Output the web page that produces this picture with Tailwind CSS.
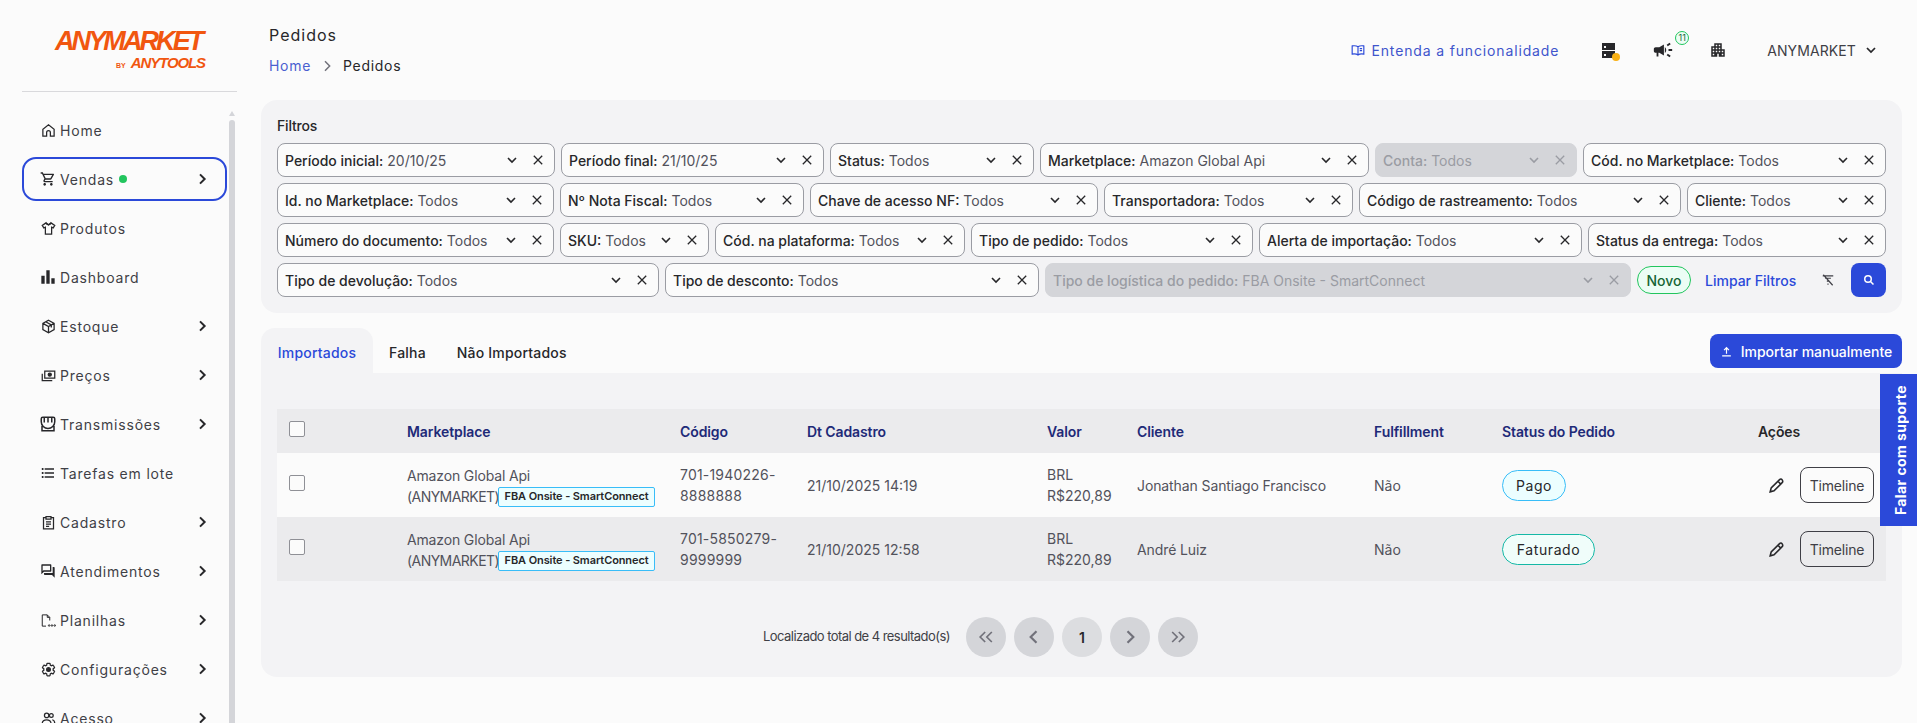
<!DOCTYPE html>
<html lang="pt-BR">
<head>
  <meta charset="UTF-8" />
  <title>Pedidos - ANYMARKET</title>
  <script src="https://cdn.jsdelivr.net/npm/@tailwindcss/browser@4"></script>
</head>
<body class="bg-[#fbfbfb] font-[Inter,sans-serif] text-[#27272a] h-[723px] overflow-hidden">
<div class="flex h-[723px] overflow-hidden relative">

  <!-- Sidebar -->
  <aside class="w-[236px] shrink-0 flex flex-col pl-[22px]">
    <div class="h-[92px] border-b border-[#d9d9dc] w-[215px] pt-[30px] pl-[33px] flex flex-col shrink-0">
      <div class="font-['Liberation_Sans'] font-bold italic text-[27px] leading-[23px] tracking-[-2.9px] text-[#f1560f] whitespace-nowrap">ANYMARKET</div>
      <div class="flex items-baseline justify-end gap-[5px] w-[150px] mt-[2px] font-['Liberation_Sans'] font-bold italic text-[#f1560f] leading-[16px]">
        <span class="text-[7px] not-italic">BY</span>
        <span class="text-[15px] tracking-[-1.1px]">ANYTOOLS</span>
      </div>
    </div>
    <div class="flex flex-1 min-h-0 overflow-hidden">
      <nav id="nav" class="w-[207px] shrink-0 pt-[16px] flex flex-col"></nav>
      <div class="w-[6px] pt-[19px] flex flex-col">
        <svg class="w-[6px] h-[5px] shrink-0 text-[#d4d5d9]" viewBox="0 0 6 5" fill="currentColor"><path d="M3 0 6 5H0z"/></svg>
        <div class="flex-1 mt-[4px] rounded-t bg-[#d4d5d9]"></div>
      </div>
    </div>
  </aside>

  <!-- Main -->
  <main class="flex-1 min-w-0 pl-[25px] pr-[15px]">
    <header class="h-[100px] flex justify-between">
      <div class="pl-[8px] pt-[24px]">
        <div class="text-[16px] leading-[22px] tracking-[1px] text-[#27272a]">Pedidos</div>
        <div class="flex items-center mt-[9px] text-[14px] leading-[22px] tracking-[0.7px]">
          <span class="text-[#4a5fd0]">Home</span>
          <svg class="w-[16px] h-[16px] mx-[8px] text-[#71717a]" viewBox="0 0 24 24" fill="none" stroke="currentColor" stroke-width="2.2"><path d="m9 5 7 7-7 7"/></svg>
          <span>Pedidos</span>
        </div>
      </div>
      <div class="flex items-center h-[100px] pr-[25px]">
        <svg class="w-[14px] h-[14px] text-[#2b49d9]" viewBox="0 0 24 24" fill="none" stroke="currentColor" stroke-width="2"><path d="M12 6.5C10 5 6 4.500 2 5v14c4-.5 8 0 10 1.500 2-1.500 6-2 10-1.500V5c-4-.5-8 0-10 1.500zM12 6.500v14M15 9.500h4M15 13h4"/></svg>
        <span class="ml-[6px] text-[14px] tracking-[0.85px] text-[#3f55cc]">Entenda a funcionalidade</span>
        <span class="relative ml-[42px] w-[17px] h-[17px]">
          <svg class="w-[15px] h-[17px] text-[#27272a]" viewBox="0 0 15 17" fill="currentColor"><path d="M1 1h13v7H1zM1 9h13v7H1z"/><path fill="#fbfbfb" d="M3 4h2v2H3zM3 12h2v2H3z"/></svg>
          <span class="absolute right-[-2px] bottom-[-2px] w-[8px] h-[8px] rounded-full bg-[#f9b115]"></span>
        </span>
        <span class="relative ml-[36px] w-[18px] h-[16px] flex items-center justify-center">
          <svg class="w-[22px] h-[22px] shrink-0 text-[#27272a]" viewBox="0 0 24 24" fill="currentColor"><path d="M18 11v2h4v-2h-4zm-2 6.610c.960.710 2.210 1.650 3.200 2.390.400-.530.800-1.070 1.200-1.600-.990-.740-2.240-1.680-3.200-2.400-.400.540-.800 1.080-1.200 1.610zM20.400 5.600c-.400-.530-.800-1.070-1.200-1.600-.990.740-2.240 1.680-3.200 2.400.400.530.800 1.070 1.200 1.600.960-.720 2.210-1.650 3.200-2.400zM4 9c-1.100 0-2 .900-2 2v2c0 1.100.900 2 2 2h1v4h2v-4h1l5 3V6L8 9H4zm11.500 3c0-1.330-.580-2.530-1.500-3.350v6.690c.920-.810 1.500-2.010 1.500-3.340z"/></svg>
          <span class="absolute left-[21px] top-[-11px] w-[14px] h-[14px] rounded-full border border-[#22c55e] bg-[#ecfdf5] text-[#166534] text-[9px] leading-[12px] text-center">11</span>
        </span>
        <svg class="ml-[37px] w-[18px] h-[18px] text-[#27272a]" viewBox="0 0 24 24" fill="currentColor"><path d="M17 11V3H7v4H3v14h8v-4h2v4h8V11h-4zM7 19H5v-2h2v2zm0-4H5v-2h2v2zm0-4H5V9h2v2zm4 4H9v-2h2v2zm0-4H9V9h2v2zm0-4H9V5h2v2zm4 8h-2v-2h2v2zm0-4h-2V9h2v2zm0-4h-2V5h2v2zm4 12h-2v-2h2v2zm0-4h-2v-2h2v2z"/></svg>
        <span class="ml-[40px] text-[14px] tracking-[0.1px] text-[#3f3f46]">ANYMARKET</span>
        <svg class="ml-[9px] w-[12px] h-[12px] text-[#27272a]" viewBox="0 0 24 24" fill="none" stroke="currentColor" stroke-width="3.500"><path d="m4 8 8 8 8-8"/></svg>
      </div>
    </header>

    <!-- Filtros -->
    <section class="h-[213px] bg-[#f3f3f5] rounded-[16px] px-[16px] pt-[15px]">
      <div class="text-[14px] leading-[22px] font-medium text-[#27272a] tracking-[-0.2px] mb-[6px]">Filtros</div>
      <div id="filters" class="flex flex-col gap-[6px]"></div>
    </section>

    <!-- Tabs -->
    <div class="flex justify-between items-end h-[60px]">
      <div class="flex text-[14px] font-medium tracking-[0.2px]">
        <div class="h-[45px] pt-[4px] w-[112px] rounded-t-[14px] bg-[#f3f3f5] text-[#2b49d9] flex items-center justify-center">Importados</div>
        <div class="h-[45px] pt-[4px] flex items-center ml-[16px]">Falha</div>
        <div class="h-[45px] pt-[4px] flex items-center ml-[31px]">Não Importados</div>
      </div>
      <button class="h-[34px] w-[192px] mb-[5px] rounded-[8px] bg-[#2b49d9] text-white text-[14px] font-medium flex items-center justify-center gap-[8px]">
        <svg class="w-[13px] h-[13px]" viewBox="0 0 24 24" fill="none" stroke="currentColor" stroke-width="2.200"><path d="M12 16V5M7.500 9.500 12 5l4.500 4.500M4 20h16"/></svg>
        Importar manualmente
      </button>
    </div>

    <!-- Pedidos -->
    <section class="bg-[#f3f3f5] rounded-b-[16px] px-[16px] pt-[36px] pb-[20px]">
      <table class="table-fixed w-[1609px] text-[14px] text-[#52525b]">
        <colgroup>
          <col class="w-[130px]"/><col class="w-[273px]"/><col class="w-[127px]"/><col class="w-[240px]"/><col class="w-[90px]"/><col class="w-[237px]"/><col class="w-[128px]"/><col class="w-[256px]"/><col class="w-[128px]"/>
        </colgroup>
        <thead class="bg-[#ebebed] text-left text-[#1e2a78] font-semibold tracking-[-0.1px]">
          <tr class="h-[44px]">
            <th class="pl-[12px] pb-[5px]"><input type="checkbox" class="appearance-none block w-[16px] h-[16px] rounded-[2px] border border-[#8f9096] bg-[#fbfbfb]"/></th>
            <th class="font-semibold">Marketplace</th><th class="font-semibold">Código</th><th class="font-semibold">Dt Cadastro</th><th class="font-semibold">Valor</th><th class="font-semibold">Cliente</th><th class="font-semibold">Fulfillment</th><th class="font-semibold">Status do Pedido</th><th class="font-semibold text-[#27272a]">Ações</th>
          </tr>
        </thead>
        <tbody id="rows"></tbody>
      </table>
      <div class="flex items-center pl-[486px] mt-[36px] h-[40px]">
        <span class="text-[13px] text-[#3f3f46] tracking-[-0.55px] w-[203px] whitespace-nowrap">Localizado total de 4 resultado(s)</span>
        <div class="flex gap-[8px] text-[#71717a]">
          <span class="w-[40px] h-[40px] rounded-full bg-[#d4d5d9] flex items-center justify-center"><svg class="w-[20px] h-[20px]" viewBox="0 0 24 24" fill="none" stroke="currentColor" stroke-width="2"><path d="m11 6-6 6 6 6M19 6l-6 6 6 6"/></svg></span>
          <span class="w-[40px] h-[40px] rounded-full bg-[#d4d5d9] flex items-center justify-center"><svg class="w-[20px] h-[20px]" viewBox="0 0 24 24" fill="none" stroke="currentColor" stroke-width="2.600"><path d="m15 5-7 7 7 7"/></svg></span>
          <span class="w-[40px] h-[40px] rounded-full bg-[#dcdde0] flex items-center justify-center text-[14px] font-semibold text-[#27272a]">1</span>
          <span class="w-[40px] h-[40px] rounded-full bg-[#d4d5d9] flex items-center justify-center"><svg class="w-[20px] h-[20px]" viewBox="0 0 24 24" fill="none" stroke="currentColor" stroke-width="2.600"><path d="m9 5 7 7-7 7"/></svg></span>
          <span class="w-[40px] h-[40px] rounded-full bg-[#d4d5d9] flex items-center justify-center"><svg class="w-[20px] h-[20px]" viewBox="0 0 24 24" fill="none" stroke="currentColor" stroke-width="2"><path d="m5 6 6 6-6 6M13 6l6 6-6 6"/></svg></span>
        </div>
      </div>
    </section>
  </main>

  <!-- Falar com suporte -->
  <div class="absolute right-0 top-[374px] w-[37px] h-[152px] pl-[3px] bg-[#2b49d9] text-white flex items-center justify-center">
    <span class="[writing-mode:vertical-rl] rotate-180 font-bold text-[14px] tracking-[0.4px] whitespace-nowrap">Falar com suporte</span>
  </div>
</div>

<script>
  const chevron = '<svg class="w-[16px] h-[16px]" viewBox="0 0 24 24" fill="none" stroke="currentColor" stroke-width="3"><path d="m9 5 7 7-7 7"/></svg>';
  const stroke = 'fill="none" stroke="currentColor" stroke-width="2"';
  const icons = {
    home: `<svg class="w-[15px] h-[15px]" viewBox="0 0 24 24" ${stroke}><path d="M3 21V10l9-7 9 7v11h-6v-6a3 3 0 0 0-6 0v6z"/></svg>`,
    cart: '<svg class="w-[16px] h-[16px]" viewBox="0 0 24 24" fill="currentColor"><path d="M15.550 13c.750 0 1.410-.410 1.750-1.030l3.580-6.490A.996.996 0 0 0 20.010 4H5.210l-.940-2H1v2h2l3.600 7.590-1.350 2.440C4.520 15.370 5.480 17 7 17h12v-2H7l1.100-2h7.450zM6.160 6h12.150l-2.760 5H8.530L6.160 6zM7 18c-1.100 0-1.990.900-1.990 2S5.900 22 7 22s2-.900 2-2-.900-2-2-2zm10 0c-1.100 0-1.990.900-1.990 2s.890 2 1.990 2 2-.900 2-2-.900-2-2-2z"/></svg>',
    shirt: `<svg class="w-[15px] h-[15px]" viewBox="0 0 24 24" ${stroke}><path d="M8 3 2 7l2.500 4L7 10v11h10V10l2.500 1L22 7l-6-4c-.5 2-2 3-4 3s-3.500-1-4-3z"/><path d="M8 3c1 1 2.500 1.500 4 3 1.500-1.500 3-2 4-3"/></svg>`,
    chart: '<svg class="w-[16px] h-[16px]" viewBox="0 0 24 24" fill="currentColor"><path d="M2 10h5v12H2zM9.500 2h5v20h-5zM17 14h5v8h-5z"/></svg>',
    box: `<svg class="w-[15px] h-[15px]" viewBox="0 0 24 24" ${stroke}><path d="m12 2 9 5v10l-9 5-9-5V7zM3 7l9 5 9-5M12 12v10M7.500 4.500l9 5v4"/></svg>`,
    money: `<svg class="w-[15px] h-[15px]" viewBox="0 0 24 24" ${stroke}><path d="M6 5h16v11H6z"/><circle cx="14" cy="10.500" r="2.500" fill="currentColor"/><path d="M2 9v11h16" /></svg>`,
    store: `<svg class="w-[18px] h-[18px] shrink-0" viewBox="0 0 24 24" ${stroke}><path d="M3 9V5a2 2 0 0 1 2-2h14a2 2 0 0 1 2 2v4a3 3 0 0 1-18 0zM7 3v7M12 3v7M17 3v7M4 12v9h16v-9"/></svg>`,
    list: '<svg class="w-[16px] h-[16px]" viewBox="0 0 24 24" fill="currentColor"><path d="M4 10.500c-.830 0-1.500.670-1.500 1.500s.670 1.500 1.500 1.500 1.500-.670 1.500-1.500-.670-1.500-1.500-1.500zm0-6c-.830 0-1.500.670-1.500 1.500S3.170 7.500 4 7.500 5.500 6.830 5.500 6 4.830 4.500 4 4.500zm0 12c-.830 0-1.500.680-1.500 1.500s.680 1.500 1.500 1.500 1.500-.680 1.500-1.500-.670-1.500-1.500-1.500zM7 19h14v-2H7v2zm0-6h14v-2H7v2zm0-8v2h14V5H7z"/></svg>',
    clip: `<svg class="w-[15px] h-[15px]" viewBox="0 0 24 24" ${stroke}><path d="M8 4H4v18h16V4h-4M8 2.500h8v4H8zM8 11h8M8 14.500h8M8 18h5"/></svg>`,
    chat: '<svg class="w-[16px] h-[16px]" viewBox="0 0 24 24" fill="currentColor"><path d="M15 4v7H5.170L4 12.170V4h11m1-2H3c-.550 0-1 .450-1 1v14l4-4h10c.550 0 1-.450 1-1V3c0-.550-.450-1-1-1zm5 4h-2v9H6v2c0 .550.450 1 1 1h11l4 4V7c0-.550-.450-1-1-1z"/></svg>',
    sheet: `<svg class="w-[15px] h-[15px]" viewBox="0 0 24 24" fill="none" stroke="currentColor" stroke-width="1.600"><path d="M8 21H2V3h8l4 4v5"/><path d="M10 3v4h4"/><circle cx="13" cy="20" r="1.200"/><circle cx="17.500" cy="20" r="1.200"/><circle cx="22" cy="20" r="1.200"/></svg>`,
    gear: `<svg class="w-[15px] h-[15px]" viewBox="0 0 24 24" ${stroke}><path d="M19.430 12.980c.040-.320.070-.640.070-.980s-.030-.660-.070-.980l2.110-1.650c.190-.150.240-.420.120-.640l-2-3.460c-.120-.220-.390-.300-.610-.220l-2.490 1c-.520-.400-1.080-.730-1.690-.980l-.380-2.650C14.460 2.180 14.250 2 14 2h-4c-.250 0-.460.180-.490.420l-.380 2.650c-.610.250-1.170.590-1.690.980l-2.490-1c-.230-.090-.490 0-.610.220l-2 3.460c-.130.220-.070.490.120.640l2.110 1.650c-.040.320-.070.650-.070.980s.030.660.070.980l-2.110 1.650c-.190.150-.240.420-.120.640l2 3.460c.120.220.390.300.610.220l2.490-1c.520.400 1.080.730 1.690.980l.380 2.650c.030.240.240.420.490.420h4c.250 0 .460-.180.490-.420l.380-2.650c.610-.250 1.170-.590 1.690-.980l2.490 1c.230.090.490 0 .610-.220l2-3.460c.120-.220.070-.490-.120-.640l-2.110-1.650z"/><circle cx="12" cy="12" r="3" fill="currentColor"/></svg>`,
    users: `<svg class="w-[15px] h-[15px]" viewBox="0 0 24 24" ${stroke}><circle cx="9" cy="7" r="3.500"/><circle cx="16.500" cy="7" r="3"/><path d="M2 20c0-4 3-6 7-6s7 2 7 6zM18 14c2.500.500 4 2.500 4 6"/></svg>`
  };

  const navItems = [
    ['home', 'Home', false], ['cart', 'Vendas', true], ['shirt', 'Produtos', false], ['chart', 'Dashboard', false],
    ['box', 'Estoque', true], ['money', 'Preços', true], ['store', 'Transmissões', true], ['list', 'Tarefas em lote', false],
    ['clip', 'Cadastro', true], ['chat', 'Atendimentos', true], ['sheet', 'Planilhas', true], ['gear', 'Configurações', true], ['users', 'Acesso', true]
  ];
  document.getElementById('nav').innerHTML = navItems.map(([icon, label, arrow]) => {
    const active = label === 'Vendas';
    return `<div class="shrink-0 h-[44px] mb-[5px] w-[205px] flex items-center pl-[16px] pr-[15px] rounded-[14px] border-2 ${active ? 'border-[#2b49d9]' : 'border-transparent'} text-[14px] tracking-[0.8px] text-[#3f3f46]">
      <span class="w-[16px] flex justify-center text-[#27272a]">${icons[icon]}</span>
      <span class="ml-[4px]">${label}</span>
      ${active ? '<span class="ml-[5px] w-[8px] h-[8px] rounded-full bg-[#22c55e]"></span>' : ''}
      ${arrow ? `<span class="ml-auto text-[#27272a]">${chevron}</span>` : ''}
    </div>`;
  }).join('');

  // [width, label, value, disabled]
  const filterRows = [
    [[278, 'Período inicial', '20/10/25'], [263, 'Período final', '21/10/25'], [204, 'Status', 'Todos'], [329, 'Marketplace', 'Amazon Global Api'], [202, 'Conta', 'Todos', true], [303, 'Cód. no Marketplace', 'Todos']],
    [[277, 'Id. no Marketplace', 'Todos'], [244, 'Nº Nota Fiscal', 'Todos'], [288, 'Chave de acesso NF', 'Todos'], [249, 'Transportadora', 'Todos'], [322, 'Código de rastreamento', 'Todos'], [199, 'Cliente', 'Todos']],
    [[277, 'Número do documento', 'Todos'], [149, 'SKU', 'Todos'], [250, 'Cód. na plataforma', 'Todos'], [282, 'Tipo de pedido', 'Todos'], [323, 'Alerta de importação', 'Todos'], [298, 'Status da entrega', 'Todos']]
  ];

  function chip([width, label, value, disabled]) {
    return `<div style="width:${width}px" class="shrink-0 h-[34px] rounded-[8px] flex items-center pl-[7px] pr-[11px] border text-[14px] ${disabled ? 'bg-[#d4d5d9] border-[#d4d5d9] text-[#9a9ca3]' : 'bg-[#fbfbfb] border-[#9a9ca3] text-[#27272a]'}">
      <span class="flex-1 min-w-0 truncate"><span class="font-medium">${label}:</span> <span class="${disabled ? '' : 'text-[#52525b]'}">${value}</span></span>
      <svg class="w-[10px] h-[10px] shrink-0" viewBox="0 0 10 10" fill="none" stroke="currentColor" stroke-width="1.600"><path d="m1 3 4 4 4-4"/></svg>
      <svg class="ml-[16px] w-[10px] h-[10px] shrink-0" viewBox="0 0 10 10" fill="none" stroke="currentColor" stroke-width="1.300"><path d="m.8.8 8.400 8.400M9.200.8.8 9.200"/></svg>
    </div>`;
  }

  const extras = `
    <div class="shrink-0 h-[28px] w-[54px] rounded-full border border-[#22c55e] bg-[#ecfdf5] text-[#166534] text-[14px] font-medium flex items-center justify-center">Novo</div>
    <span class="ml-[14px] shrink-0 text-[14px] font-medium text-[#2b49d9]">Limpar Filtros</span>
    <svg class="ml-[25px] w-[14px] h-[14px] text-[#3f3f46] shrink-0" viewBox="0 0 24 24" fill="none" stroke="currentColor" stroke-width="2"><path d="M3 5h18M7 9h10M10 14h4M11 19h2M4 3l16 18"/></svg>
    <span class="ml-auto w-[35px] h-[34px] rounded-[8px] bg-[#2b49d9] flex items-center justify-center shrink-0"><svg class="w-[12px] h-[12px] text-white" viewBox="0 0 24 24" fill="none" stroke="currentColor" stroke-width="3"><circle cx="10" cy="10" r="6.500"/><path d="m15 15 6 6"/></svg></span>`;

  const rowHtml = r => `<div class="flex gap-[6px]">${r.map(chip).join('')}</div>`;
  document.getElementById('filters').innerHTML = filterRows.map(rowHtml).join('') +
    `<div class="flex items-center gap-[6px]">${chip([382, 'Tipo de devolução', 'Todos'])}${chip([374, 'Tipo de desconto', 'Todos'])}${chip([586, 'Tipo de logística do pedido', 'FBA Onsite - SmartConnect', true])}<div class="flex items-center flex-1 min-w-0">${extras}</div></div>`;

  const orders = [
    ['701-1940226-', '8888888', '21/10/2025 14:19', 'Jonathan Santiago Francisco', 'Pago', 'border-[#38bdf8] bg-[#ecfeff] w-[64px]', 'bg-[#fbfbfb]'],
    ['701-5850279-', '9999999', '21/10/2025 12:58', 'André Luiz', 'Faturado', 'border-[#14b8a6] bg-[#f0fdfa] w-[93px]', 'bg-[#ebebed]']
  ];
  document.getElementById('rows').innerHTML = orders.map(o => `
    <tr class="h-[64px] ${o[6]}">
      <td class="pl-[12px] pb-[5px]"><input type="checkbox" class="appearance-none block w-[16px] h-[16px] rounded-[2px] border border-[#8f9096] bg-[#fbfbfb]"/></td>
      <td class="leading-[21px] pt-[2px] tracking-[-0.15px]">Amazon Global Api<br/>
        <span class="inline-flex items-center tracking-[-0.55px]">(ANYMARKET)<span class="-ml-[1px] h-[20px] w-[157px] rounded-[2px] border border-[#38bdf8] bg-[#ecfeff] text-[11px] font-semibold text-[#27272a] tracking-[-0.1px] flex items-center justify-center">FBA Onsite - SmartConnect</span></span></td>
      <td class="leading-[21px] tracking-[0.2px]">${o[0]}<br/>${o[1]}</td>
      <td>${o[2]}</td>
      <td class="leading-[21px]">BRL<br/>R$220,89</td>
      <td class="tracking-[-0.1px]">${o[3]}</td>
      <td>Não</td>
      <td><span class="h-[31px] rounded-full border text-[14px] tracking-[0.6px] text-[#27272a] flex items-center justify-center ${o[5]}">${o[4]}</span></td>
      <td colspan="2">
        <div class="flex items-center justify-end pr-[12px] gap-[15px]">
          <svg class="w-[17px] h-[17px] text-[#27272a]" viewBox="0 0 24 24" fill="none" stroke="currentColor" stroke-width="2.200"><path d="M3 21l1.500-5.500L16 4c1.500-1.500 3-1.500 4 0s1.500 2.500 0 4L8.500 19.500zM14 6l4 4"/></svg>
          <button class="h-[36px] w-[74px] rounded-[8px] border border-[#3f3f46] text-[14px] text-[#3f3f46] tracking-[-0.2px]">Timeline</button>
        </div>
      </td>
    </tr>`).join('');
</script>
</body>
</html>
